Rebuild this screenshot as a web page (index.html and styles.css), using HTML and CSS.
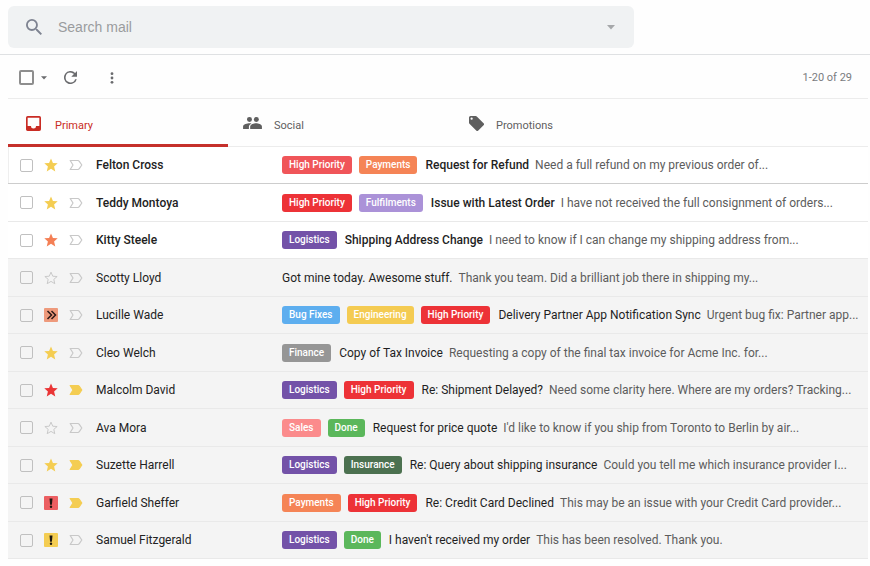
FILE: index.html
```html
<!DOCTYPE html>
<html lang="en">
<head>
<meta charset="UTF-8">
<meta name="viewport" content="width=device-width, initial-scale=1.0">
<title>Search mail</title>
<link rel="stylesheet" href="styles.css">
</head>
<body>

<!-- shared icons -->
<svg class="sprite" aria-hidden="true">
    <symbol id="star" viewBox="0 0 24 24"><path d="M12 18.300 19.300 23l-2-8.300L23.500 9.200l-8.200-.7L12 .8 8.700 8.500.5 9.200l6.200 5.500-2 8.300z"/></symbol>
    <symbol id="star-empty" viewBox="0 0 24 24"><path d="M12 17.800 18.500 21.800l-1.700-7.400 5.700-4.900-7.500-.6L12 2 9 8.900l-7.500.6 5.700 4.900-1.700 7.400z" fill="none" stroke="currentColor" stroke-width="1.700"/></symbol>
    <symbol id="tag" viewBox="0 0 14 12"><path d="M1.200 1.500h7.600c.7 0 1.200.3 1.500.9L12.800 6l-2.500 3.600c-.3.600-.8.900-1.500.9H1.200L4 6z" stroke="currentColor" stroke-width="1.200" stroke-linejoin="round"/></symbol>
    <symbol id="chevrons" viewBox="0 0 14 14"><path d="M3.500 3l4 4-4 4M7.500 3l4 4-4 4" fill="none" stroke="#2b1a17" stroke-width="1.500"/></symbol>
    <symbol id="bang" viewBox="0 0 14 14"><path d="M5.500 2.500h3L7.900 8.700H6.100z" fill="#1d1710"/><circle cx="7" cy="10.800" r="1.200" fill="#1d1710"/></symbol>
</svg>

<header class="header">
    <form class="search">
        <button type="button" class="icon-btn" aria-label="Search">
            <svg class="search-icon" viewBox="3 3 17.500 17.500"><path d="M15.500 14h-.79l-.28-.27A6.471 6.471 0 0 0 16 9.500 6.500 6.500 0 1 0 9.500 16c1.610 0 3.090-.59 4.230-1.570l.27.28v.79l5 4.990L20.490 19zm-6 0C7.010 14 5 11.990 5 9.500S7.010 5 9.500 5 14 7.010 14 9.500 11.990 14 9.500 14z"/></svg>
        </button>
        <input type="text" name="q" placeholder="Search mail" aria-label="Search mail">
        <button type="button" class="icon-btn" aria-label="Search options">
            <svg class="caret caret-big" viewBox="0 0 8 5"><path d="M0 0h8L4 4.500z"/></svg>
        </button>
    </form>
</header>

<main class="mailbox">
    <div class="toolbar">
        <input type="checkbox" class="select-all" aria-label="Select all">
        <button type="button" class="icon-btn select-menu" aria-label="Select menu">
            <svg class="caret" viewBox="0 0 8 5"><path d="M0 0h8L4 4.500z"/></svg>
        </button>
        <button type="button" class="icon-btn refresh" aria-label="Refresh">
            <svg viewBox="4 4 16 16"><path d="M17.650 6.350A8 8 0 1 0 19.730 14h-2.080A6 6 0 1 1 12 6c1.660 0 3.140.69 4.220 1.780L13 11h7V4z"/></svg>
        </button>
        <button type="button" class="icon-btn more" aria-label="More">
            <svg viewBox="0 0 4 12"><circle cx="2" cy="1.700" r="1.400"/><circle cx="2" cy="6" r="1.400"/><circle cx="2" cy="10.300" r="1.400"/></svg>
        </button>
        <span class="count">1-20 of 29</span>
    </div>

    <nav class="tabs">
        <a href="#primary" class="tab active">
            <svg viewBox="3 3 18 18"><path d="M19 3H5a2 2 0 0 0-2 2v14c0 1.100.9 2 2 2h14a2 2 0 0 0 2-2V5a2 2 0 0 0-2-2zm0 12h-4a3 3 0 0 1-6 0H5V5h14z"/></svg>
            <span>Primary</span>
        </a>
        <a href="#social" class="tab">
            <svg class="people" viewBox="1 5 22 14"><circle cx="8.500" cy="8" r="2.900"/><circle cx="16.500" cy="8" r="2.900"/><path d="M10.800 12.700C10 12.500 9.200 12.400 8.500 12.400c-2.500 0-7.500 1.300-7.500 3.800V19h6.800v-2.600c0-1.500 1.200-2.800 3-3.700zM16.300 12.400c-2.300 0-7 1.300-7 3.800V19H23v-2.800c0-2.500-4.400-3.800-6.700-3.800z"/></svg>
            <span>Social</span>
        </a>
        <a href="#promotions" class="tab">
            <svg viewBox="2 2 20 20"><path d="M21.410 11.580l-9-9A2 2 0 0 0 11 2H4a2 2 0 0 0-2 2v7c0 .55.22 1.050.59 1.420l9 9a2 2 0 0 0 2.820 0l7-7a2 2 0 0 0 0-2.840zM5.500 7a1.500 1.500 0 1 1 0-3 1.500 1.500 0 0 1 0 3z"/></svg>
            <span>Promotions</span>
        </a>
    </nav>

    <table class="mails">
        <colgroup>
            <col class="col-check"><col class="col-star"><col class="col-tag"><col class="col-sender"><col>
        </colgroup>
        <tbody>
            <tr class="unread hovered">
                <td><input type="checkbox" aria-label="Select Felton Cross"></td>
                <td><button type="button" class="icon-btn star yellow" aria-label="Star"><svg><use href="#star"/></svg></button></td>
                <td><button type="button" class="icon-btn tag" aria-label="Important"><svg><use href="#tag"/></svg></button></td>
                <td class="sender">Felton Cross</td>
                <td><div class="message"><span class="label high-soft">High Priority</span><span class="label payments">Payments</span><span class="subject">Request for Refund</span><span class="snippet">Need a full refund on my previous order of...</span></div></td>
            </tr>
            <tr class="unread">
                <td><input type="checkbox" aria-label="Select Teddy Montoya"></td>
                <td><button type="button" class="icon-btn star yellow" aria-label="Star"><svg><use href="#star"/></svg></button></td>
                <td><button type="button" class="icon-btn tag" aria-label="Important"><svg><use href="#tag"/></svg></button></td>
                <td class="sender">Teddy Montoya</td>
                <td><div class="message"><span class="label high">High Priority</span><span class="label fulfilments">Fulfilments</span><span class="subject">Issue with Latest Order</span><span class="snippet">I have not received the full consignment of orders...</span></div></td>
            </tr>
            <tr class="unread">
                <td><input type="checkbox" aria-label="Select Kitty Steele"></td>
                <td><button type="button" class="icon-btn star orange" aria-label="Star"><svg><use href="#star"/></svg></button></td>
                <td><button type="button" class="icon-btn tag" aria-label="Important"><svg><use href="#tag"/></svg></button></td>
                <td class="sender">Kitty Steele</td>
                <td><div class="message"><span class="label logistics">Logistics</span><span class="subject">Shipping Address Change</span><span class="snippet">I need to know if I can change my shipping address from...</span></div></td>
            </tr>
            <tr>
                <td><input type="checkbox" aria-label="Select Scotty Lloyd"></td>
                <td><button type="button" class="icon-btn star" aria-label="Star"><svg><use href="#star-empty"/></svg></button></td>
                <td><button type="button" class="icon-btn tag" aria-label="Important"><svg><use href="#tag"/></svg></button></td>
                <td class="sender">Scotty Lloyd</td>
                <td><div class="message"><span class="subject">Got mine today. Awesome stuff.</span><span class="snippet">Thank you team. Did a brilliant job there in shipping my...</span></div></td>
            </tr>
            <tr>
                <td><input type="checkbox" aria-label="Select Lucille Wade"></td>
                <td><button type="button" class="icon-btn star square sq-orange" aria-label="Star"><svg><use href="#chevrons"/></svg></button></td>
                <td><button type="button" class="icon-btn tag" aria-label="Important"><svg><use href="#tag"/></svg></button></td>
                <td class="sender">Lucille Wade</td>
                <td><div class="message"><span class="label bugs">Bug Fixes</span><span class="label engineering">Engineering</span><span class="label high">High Priority</span><span class="subject">Delivery Partner App Notification Sync</span><span class="snippet">Urgent bug fix: Partner app...</span></div></td>
            </tr>
            <tr>
                <td><input type="checkbox" aria-label="Select Cleo Welch"></td>
                <td><button type="button" class="icon-btn star yellow" aria-label="Star"><svg><use href="#star"/></svg></button></td>
                <td><button type="button" class="icon-btn tag" aria-label="Important"><svg><use href="#tag"/></svg></button></td>
                <td class="sender">Cleo Welch</td>
                <td><div class="message"><span class="label finance">Finance</span><span class="subject">Copy of Tax Invoice</span><span class="snippet">Requesting a copy of the final tax invoice for Acme Inc. for...</span></div></td>
            </tr>
            <tr>
                <td><input type="checkbox" aria-label="Select Malcolm David"></td>
                <td><button type="button" class="icon-btn star red" aria-label="Star"><svg><use href="#star"/></svg></button></td>
                <td><button type="button" class="icon-btn tag important" aria-label="Important"><svg><use href="#tag"/></svg></button></td>
                <td class="sender">Malcolm David</td>
                <td><div class="message"><span class="label logistics">Logistics</span><span class="label high">High Priority</span><span class="subject">Re: Shipment Delayed?</span><span class="snippet">Need some clarity here. Where are my orders? Tracking...</span></div></td>
            </tr>
            <tr>
                <td><input type="checkbox" aria-label="Select Ava Mora"></td>
                <td><button type="button" class="icon-btn star" aria-label="Star"><svg><use href="#star-empty"/></svg></button></td>
                <td><button type="button" class="icon-btn tag" aria-label="Important"><svg><use href="#tag"/></svg></button></td>
                <td class="sender">Ava Mora</td>
                <td><div class="message"><span class="label sales">Sales</span><span class="label done">Done</span><span class="subject">Request for price quote</span><span class="snippet">I'd like to know if you ship from Toronto to Berlin by air...</span></div></td>
            </tr>
            <tr>
                <td><input type="checkbox" aria-label="Select Suzette Harrell"></td>
                <td><button type="button" class="icon-btn star yellow" aria-label="Star"><svg><use href="#star"/></svg></button></td>
                <td><button type="button" class="icon-btn tag important" aria-label="Important"><svg><use href="#tag"/></svg></button></td>
                <td class="sender">Suzette Harrell</td>
                <td><div class="message"><span class="label logistics">Logistics</span><span class="label insurance">Insurance</span><span class="subject">Re: Query about shipping insurance</span><span class="snippet">Could you tell me which insurance provider I...</span></div></td>
            </tr>
            <tr>
                <td><input type="checkbox" aria-label="Select Garfield Sheffer"></td>
                <td><button type="button" class="icon-btn star square sq-red" aria-label="Star"><svg><use href="#bang"/></svg></button></td>
                <td><button type="button" class="icon-btn tag important" aria-label="Important"><svg><use href="#tag"/></svg></button></td>
                <td class="sender">Garfield Sheffer</td>
                <td><div class="message"><span class="label payments">Payments</span><span class="label high">High Priority</span><span class="subject">Re: Credit Card Declined</span><span class="snippet">This may be an issue with your Credit Card provider...</span></div></td>
            </tr>
            <tr>
                <td><input type="checkbox" aria-label="Select Samuel Fitzgerald"></td>
                <td><button type="button" class="icon-btn star square sq-yellow" aria-label="Star"><svg><use href="#bang"/></svg></button></td>
                <td><button type="button" class="icon-btn tag" aria-label="Important"><svg><use href="#tag"/></svg></button></td>
                <td class="sender">Samuel Fitzgerald</td>
                <td><div class="message"><span class="label logistics">Logistics</span><span class="label done">Done</span><span class="subject">I haven't received my order</span><span class="snippet">This has been resolved. Thank you.</span></div></td>
            </tr>
        </tbody>
    </table>
</main>

</body>
</html>
```
FILE: styles.css
```css
* {
    box-sizing: border-box;
}

body {
    margin: 0;
    background: #fefefe;
    color: #222;
    font-family: Roboto, sans-serif;
    font-size: 12px;
}

.sprite {
    display: none;
}

svg {
    display: block;
    fill: currentColor;
}

.icon-btn {
    display: flex;
    align-items: center;
    justify-content: center;
    padding: 0;
    border: none;
    background: none;
    color: #6a6b6e;
    cursor: pointer;
}

input[type="checkbox"] {
    appearance: none;
    display: block;
    width: 13px;
    height: 13px;
    margin: 0;
    border: 1px solid #c0c0c0;
    border-radius: 2px;
}

/* header */
.header {
    padding: 6px 8px;
    border-bottom: 1px solid #dfe1e3;
}

.search {
    display: flex;
    align-items: center;
    width: 72vw;
    height: 42px;
    padding: 0 19px 0 18px;
    border-radius: 6px;
    background: #f0f2f3;
}

.search-icon {
    width: 16px;
    height: 16px;
    color: #7e8391;
}

.search input {
    flex: 1;
    min-width: 0;
    padding: 0 16px;
    border: none;
    outline: none;
    background: none;
    font-family: "Liberation Sans", Arial, sans-serif;
    font-size: 14px;
}

.search input::placeholder {
    color: #9a9c9e;
}

.caret {
    width: 6px;
    height: 4px;
}

.caret-big {
    width: 8px;
    height: 5px;
    color: #a6a8aa;
}

/* toolbar */
.mailbox {
    padding: 0 2px 0 8px;
}

.toolbar {
    display: flex;
    align-items: center;
    height: 44px;
    padding: 2px 16px 0 11px;
    border-bottom: 1px solid #ececec;
}

.toolbar .select-all {
    width: 15px;
    height: 15px;
    border: 2px solid #8e8e8e;
}

.select-menu {
    margin-left: 7px;
}

.refresh {
    margin-left: 17px;
}

.refresh svg {
    width: 13px;
    height: 13px;
}

.more {
    margin-left: 33px;
}

.more svg {
    width: 4px;
    height: 12px;
}

.count {
    margin-left: auto;
    color: #7a7c7e;
    font-size: 11px;
}

/* tabs */
.tabs {
    display: flex;
    height: 48px;
    border-bottom: 1px solid #ececec;
}

.tab {
    display: flex;
    flex: 0 1 226px;
    align-items: center;
    gap: 12px;
    height: 48px;
    padding: 4px 15px 0;
    color: #5f5f5f;
    font-size: 11px;
    text-decoration: none;
}

.tab.active {
    flex-basis: 220px;
    gap: 14px;
    padding-left: 18px;
    box-shadow: inset 0 -3px #c5302b;
    color: #c92c24;
}

.tab svg {
    width: 15px;
    height: 15px;
    margin-bottom: 4px;
}

.tab .people {
    width: 19px;
    height: 12px;
}

/* mail list */
.mails {
    width: 100%;
    table-layout: fixed;
    border-collapse: separate;
    border-spacing: 0;
}

.col-check {
    width: 35px;
}

.col-star {
    width: 26px;
}

.col-tag {
    width: 27px;
}

.col-sender {
    width: 186px;
}

.mails td {
    height: 37px;
    padding: 0;
    border-bottom: 1px solid #e9e9e9;
    background: #f4f4f4;
    vertical-align: middle;
}

.mails tr:nth-child(even) td {
    height: 38px;
}

.mails td:first-child {
    padding-left: 12px;
}

.mails .unread td {
    background: #fff;
}

.mails .hovered td {
    border-bottom-color: #cdcdcd;
}

.mails .hovered td:first-child {
    box-shadow: inset 1px 0 #eee;
}

.star {
    width: 16px;
    height: 16px;
    color: #c8c8c8;
}

.star svg {
    width: 14px;
    height: 14px;
}

.yellow {
    color: #f4cd52;
}

.orange {
    color: #f47f55;
}

.red {
    color: #ea3536;
}

.square {
    width: 14px;
    height: 14px;
    margin-left: 1px;
    border-radius: 1px;
}

.sq-orange {
    background: #ee9a7c;
}

.sq-red {
    background: #ec5f62;
}

.sq-yellow {
    background: #f4cd52;
}

.tag {
    color: #c8c8c8;
}

.tag svg {
    width: 14px;
    height: 12px;
    fill: none;
}

.tag.important {
    color: #f4cd52;
}

.tag.important svg {
    fill: currentColor;
}

.message {
    display: flex;
    align-items: center;
    overflow: hidden;
    white-space: nowrap;
}

.subject {
    margin-right: 6px;
    color: #1f1f1f;
}

.label + .subject {
    margin-left: 1px;
}

.unread .sender,
.unread .subject {
    font-weight: 500;
}

.snippet {
    color: #5c5c5c;
}

.label {
    margin-right: 7px;
    padding: 0 7px;
    border-radius: 3px;
    color: #fff;
    font-size: 10px;
    font-weight: 500;
    line-height: 18px;
}

.high {
    background: #ed3237;
}

.high-soft {
    background: #f05559;
}

.payments {
    background: #f58456;
}

.fulfilments {
    background: #ab92d8;
}

.logistics {
    background: #7352a8;
}

.bugs {
    background: #5daeef;
}

.engineering {
    background: #f4cb52;
}

.finance {
    background: #969696;
}

.sales {
    background: #fb8b8c;
}

.done {
    background: #5bb75b;
}

.insurance {
    background: #4c7150;
}
```
